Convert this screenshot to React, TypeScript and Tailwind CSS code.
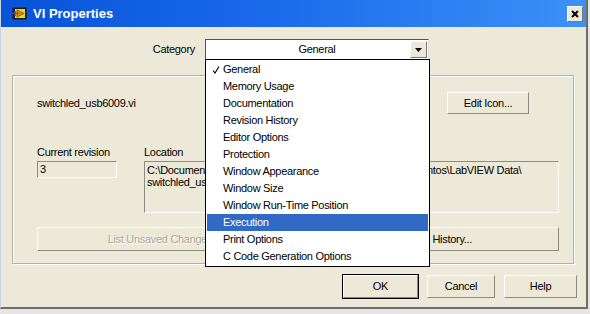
import React from 'react';

const FONT = { fontFamily: '"Liberation Sans", Arial, sans-serif' };

const MENU_ITEMS = [
  'General',
  'Memory Usage',
  'Documentation',
  'Revision History',
  'Editor Options',
  'Protection',
  'Window Appearance',
  'Window Size',
  'Window Run-Time Position',
  'Execution',
  'Print Options',
  'C Code Generation Options',
];

function LvIcon() {
  return (
    <svg width="15" height="13" viewBox="0 0 15 13" className="shrink-0">
      <rect x="0.5" y="0.5" width="14" height="12" fill="#1a1a1a" />
      <rect x="3" y="2" width="10" height="9" fill="#f4d21a" />
      <path d="M5 3 L12 6.5 L5 10 Z" fill="#d08a10" stroke="#5a3a00" strokeWidth="0.6" />
      <line x1="0" y1="6.5" x2="6" y2="6.5" stroke="#e02020" strokeWidth="1.4" />
      <line x1="3" y1="4" x2="3" y2="9" stroke="#2050e0" strokeWidth="1.4" />
    </svg>
  );
}

function Check() {
  return (
    <svg width="8" height="8" viewBox="0 0 8 8" className="absolute left-[5px] top-[5px]">
      <path d="M1 4.5 L3 7 L7 0.5" fill="none" stroke="#000" strokeWidth="1.1" />
    </svg>
  );
}

function Btn({ children, w, disabled, isDefault }: { children: React.ReactNode; w: string; disabled?: boolean; isDefault?: boolean }) {
  return (
    <div
      className={`${w} h-full flex items-center justify-center bg-[#ece9d8] border border-t-white border-l-white border-r-[#8d8a7f] border-b-[#8d8a7f] ${
        isDefault ? 'outline outline-1 outline-black' : ''
      } ${disabled ? 'text-[#aca899] [text-shadow:1px_1px_0_#fff]' : 'text-black'}`}
    >
      {children}
    </div>
  );
}

export default function App() {
  return (
    <div
      className="relative w-[590px] h-[314px] overflow-hidden bg-[#e4e4e4] text-[11px] tracking-[-0.3px] text-black"
      style={FONT}
    >
      <div className="w-[588px] h-[309px] flex flex-col bg-[#ece9d8] border-l border-l-[#c9d4ea] border-r-2 border-b-2 border-[#6f6d66]">
        {/* title bar */}
        <div className="h-[27px] shrink-0 flex items-center pl-[11px] bg-gradient-to-r from-[#0653d8] via-[#1d6cec] to-[#3d91f7]">
          <LvIcon />
          <span className="ml-[6px] text-white font-bold text-[13px] tracking-normal">VI Properties</span>
          <div className="ml-auto mr-[3px] w-[16px] h-[16px] flex items-center justify-center bg-[#ece9d8] border border-t-white border-l-white border-r-[#7a786e] border-b-[#7a786e]">
            <svg width="8" height="8" viewBox="0 0 8 8">
              <path d="M1 1 L7 7 M7 1 L1 7" stroke="#000" strokeWidth="2" />
            </svg>
          </div>
        </div>

        {/* category */}
        <div className="mt-[12px] h-[21px] flex items-center">
          <div className="w-[194px] text-right">Category</div>
          <div className="ml-[10px] w-[224px] h-full bg-white border border-[#555] border-b-[#ddd] border-r-[#ddd] relative flex items-center justify-center">
            <span>General</span>
            <div className="absolute right-[1px] top-[1px] w-[17px] h-[17px] bg-[#ece9d8] border border-t-white border-l-white border-r-[#7a786e] border-b-[#7a786e] flex items-center justify-center">
              <svg width="7" height="4" viewBox="0 0 7 4">
                <path d="M0 0 H7 L3.5 4 Z" fill="#000" />
              </svg>
            </div>
          </div>
        </div>

        {/* group box */}
        <div className="mt-[15px] ml-[11px] w-[562px] h-[189px] border border-[#b3b0a0] shadow-[inset_1px_1px_0_#fff,1px_1px_0_#fff] flex flex-col">
          <div className="mt-[16px] h-[22px] flex items-center pl-[24px]">
            <span className="flex-1">switchled_usb6009.vi</span>
            <Btn w="w-[82px]">Edit Icon...</Btn>
            <div className="w-[44px]" />
          </div>

          <div className="mt-[31px] flex pl-[24px]">
            <div className="w-[80px] flex flex-col">
              <div className="h-[15px] leading-[15px]">Current revision</div>
              <div className="mt-[1px] h-[17px] border border-t-[#8d8a7f] border-l-[#8d8a7f] border-b-white border-r-white pl-[2px] leading-[15px]">
                3
              </div>
            </div>
            <div className="ml-[27px] w-[415px] flex flex-col">
              <div className="h-[15px] leading-[15px]">Location</div>
              <div className="mt-[1px] h-[52px] border border-t-[#8d8a7f] border-l-[#8d8a7f] border-b-white border-r-white pl-[2px] pt-[2px] leading-[12px] overflow-hidden">
                <div className="whitespace-nowrap">C:\Documents and Settings\Administrador.LAB1\Mis documentos\LabVIEW Data\</div>
                <div>switchled_usb6009.vi</div>
              </div>
            </div>
          </div>

          <div className="mt-[14px] h-[24px] flex pl-[24px]">
            <Btn w="w-[246px]" disabled>
              List Unsaved Changes
            </Btn>
            <div className="w-[20px]" />
            <Btn w="w-[256px]">Revision History...</Btn>
          </div>
        </div>

        {/* bottom buttons */}
        <div className="mt-[11px] h-[23px] flex pl-[342px]">
          <Btn w="w-[75px]" isDefault>
            OK
          </Btn>
          <div className="w-[9px]" />
          <Btn w="w-[68px]">Cancel</Btn>
          <div className="w-[9px]" />
          <Btn w="w-[73px]">Help</Btn>
        </div>
      </div>

      {/* open category list */}
      <div className="absolute left-[205px] top-[59px] w-[225px] bg-white border border-black p-[1px] flex flex-col">
        {MENU_ITEMS.map((item, i) => (
          <div
            key={item}
            className={`relative h-[17px] leading-[17px] pl-[16px] ${i === 9 ? 'bg-[#316ac5] text-white' : ''}`}
          >
            {i === 0 && <Check />}
            {item}
          </div>
        ))}
      </div>
    </div>
  );
}
